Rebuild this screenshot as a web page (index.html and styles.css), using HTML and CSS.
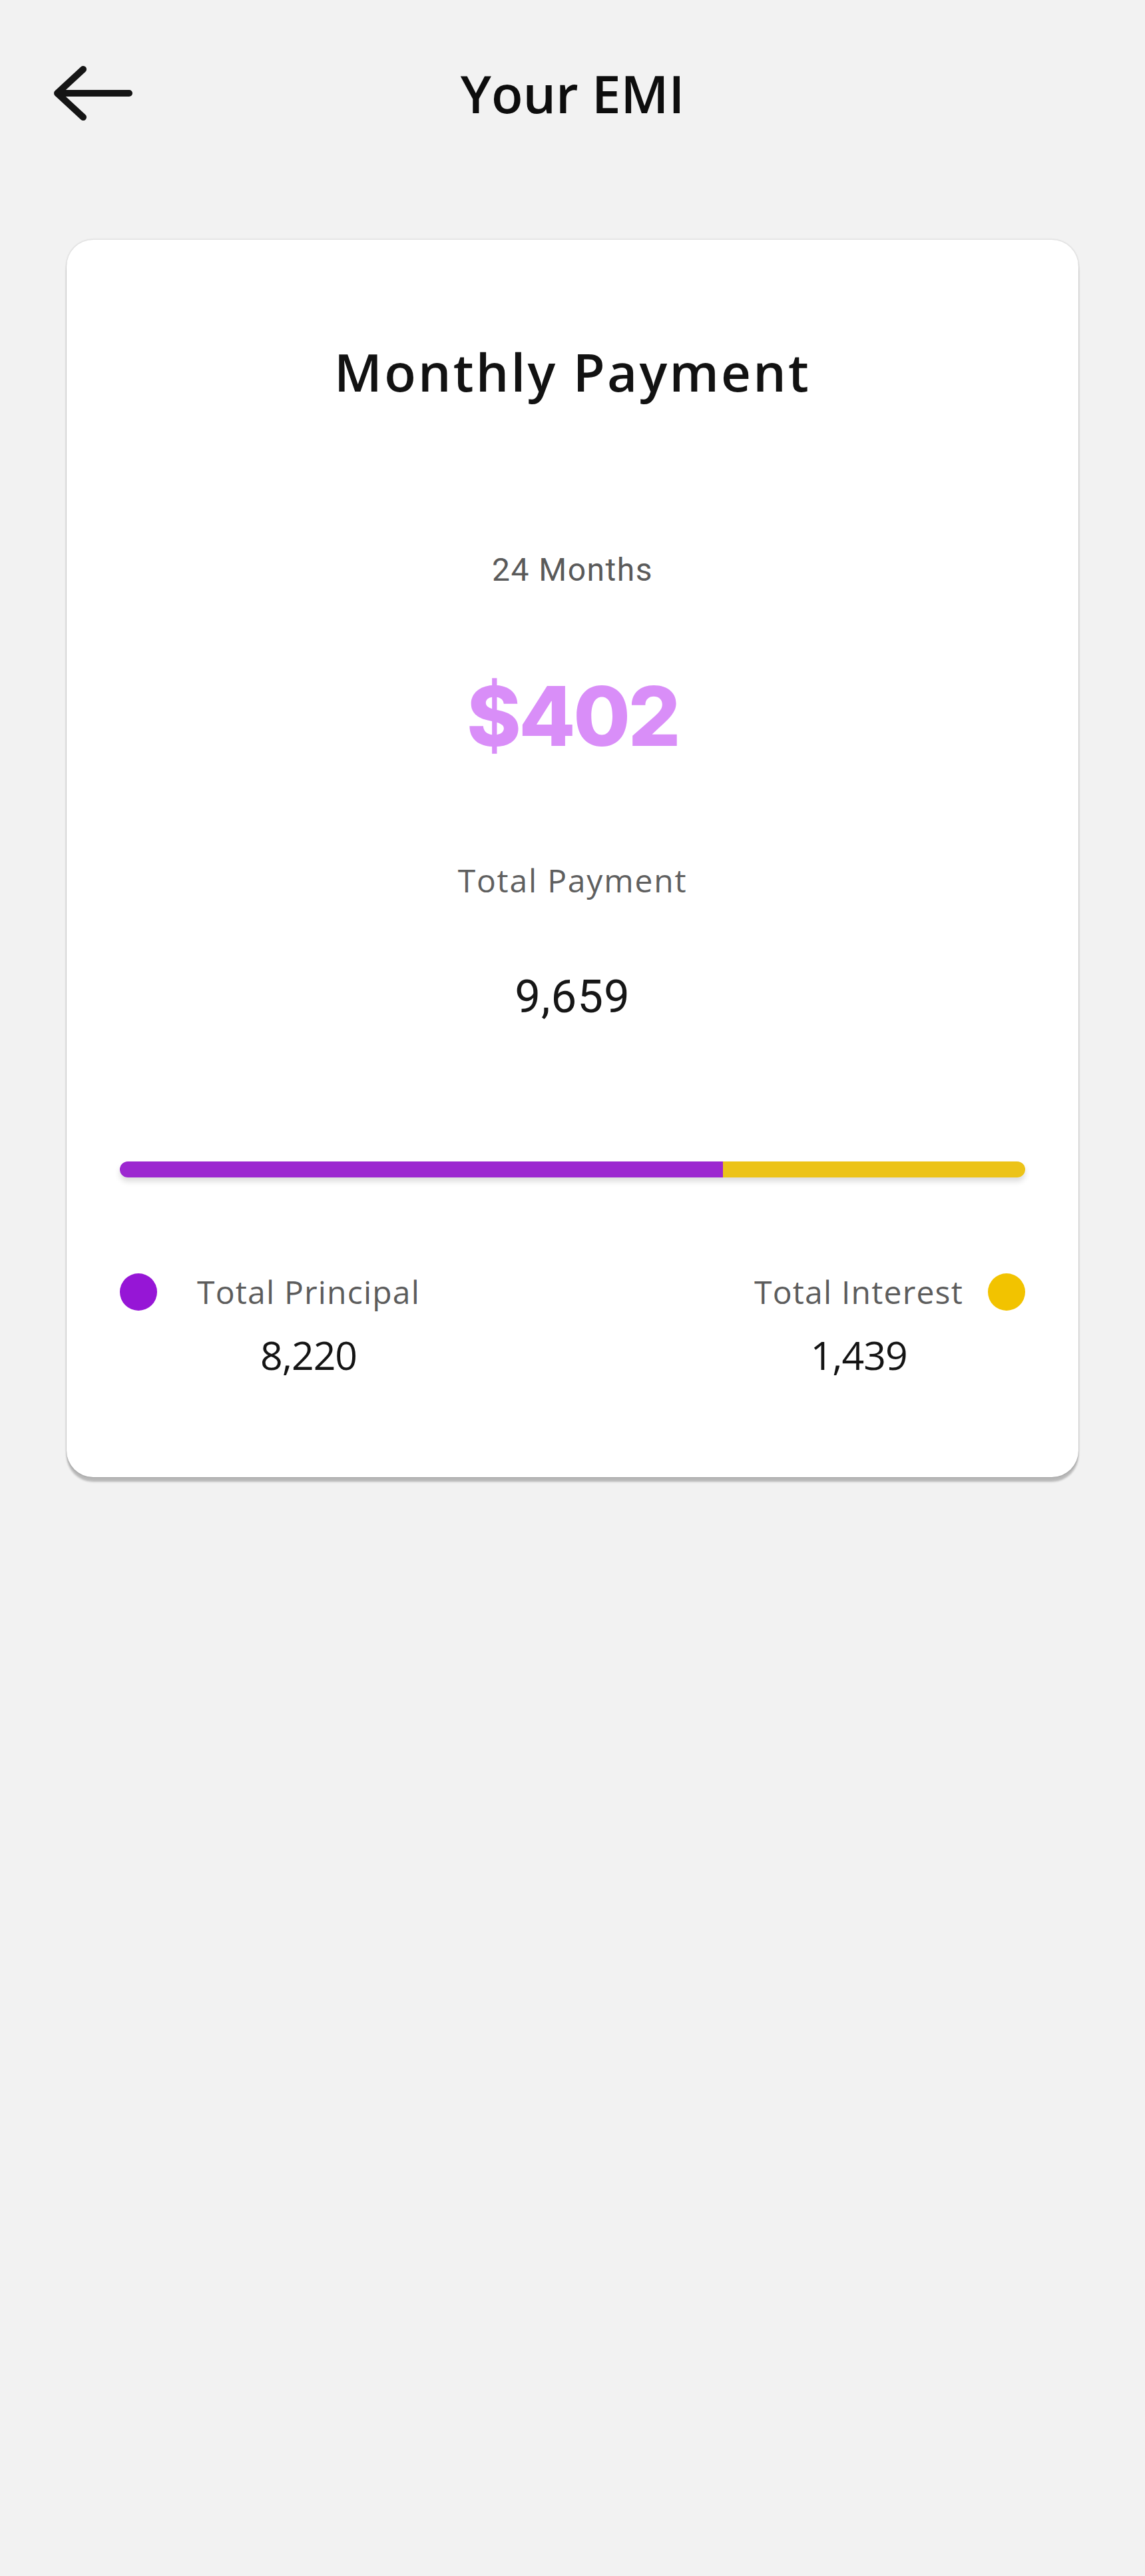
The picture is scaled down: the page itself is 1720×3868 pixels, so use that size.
FILE: index.html
```html
<!DOCTYPE html>
<html lang="en">
<head>
<meta charset="utf-8">
<title>Your EMI</title>
<link rel="stylesheet" href="styles.css">
</head>
<body>
<header class="topbar">
  <div class="topbar-left">
    <button class="back-btn" aria-label="Back">
      <svg class="back-icon" width="118" height="82" viewBox="0 0 118 82" aria-hidden="true">
        <path d="M5 41 H113 M44 5 L5 41 L44 77" fill="none" stroke="#151515" stroke-width="10" stroke-linecap="round" stroke-linejoin="round"/>
      </svg>
    </button>
  </div>
  <h1 class="topbar-title">Your EMI</h1>
  <div class="topbar-right"></div>
</header>

<main class="content">
  <section class="emi-card">
    <h2 class="card-title">Monthly Payment</h2>
    <p class="tenure">24 Months</p>
    <p class="emi-amount">$402</p>
    <p class="total-label">Total Payment</p>
    <p class="total-value">9,659</p>

    <div class="split-bar">
      <div class="split-principal" style="width: 66.6%"></div>
      <div class="split-interest"></div>
    </div>

    <div class="legend">
      <div class="legend-item legend-left">
        <span class="dot dot-principal"></span>
        <span class="legend-label">Total Principal</span>
        <span class="legend-value">8,220</span>
      </div>
      <div class="legend-item legend-right">
        <span class="legend-label">Total Interest</span>
        <span class="dot dot-interest"></span>
        <span class="legend-value">1,439</span>
      </div>
    </div>
  </section>
</main>
</body>
</html>
```

FILE: styles.css
```css
* {
  box-sizing: border-box;
}

html, body {
  margin: 0;
  padding: 0;
}

body {
  background: #f2f2f2;
  font-family: "Open Sans", "Noto Sans", sans-serif;
  color: #121212;
  min-height: 3868px;
}

.topbar {
  height: 280px;
  display: grid;
  grid-template-columns: 1fr auto 1fr;
  align-items: center;
}

.topbar-left {
  padding-left: 81px;
  display: flex;
  align-items: center;
}

.back-btn {
  background: none;
  border: 0;
  padding: 0;
  margin: 0;
  display: flex;
  cursor: pointer;
}

.back-icon {
  display: block;
}

.topbar-title {
  margin: 0;
  font-size: 78px;
  line-height: 80px;
  font-weight: 600;
  color: #0d0d0d;
  letter-spacing: 0;
}

.content {
  padding: 80px 100px 0;
}

.emi-card {
  background: #ffffff;
  border-radius: 40px;
  box-shadow: 0 7px 3px rgba(0, 0, 0, 0.24), 0 0 3px rgba(0, 0, 0, 0.22);
  padding: 148px 80px 149px;
  display: flex;
  flex-direction: column;
  align-items: center;
  text-align: center;
}

.emi-card p {
  margin: 0;
}

.card-title {
  margin: 0;
  font-size: 78px;
  line-height: 100px;
  font-weight: 600;
  color: #121212;
  letter-spacing: 3.2px;
}

.tenure {
  margin-top: 218px !important;
  font-family: Roboto, "Open Sans", sans-serif;
  font-size: 48px;
  line-height: 60px;
  color: #5a5a5a;
  letter-spacing: 1.5px;
}

.emi-amount {
  margin-top: 114px !important;
  font-family: Inter, "Open Sans", sans-serif;
  font-size: 124px;
  line-height: 150px;
  font-weight: 800;
  color: #d98ef8;
  letter-spacing: -3.5px;
}

.total-label {
  margin-top: 142px !important;
  font-size: 48px;
  line-height: 60px;
  color: #5f5f5f;
  letter-spacing: 1.8px;
}

.total-value {
  margin-top: 105px !important;
  font-family: Roboto, "Open Sans", sans-serif;
  font-size: 69px;
  line-height: 80px;
  color: #161616;
  letter-spacing: 1px;
}

.split-bar {
  margin-top: 207px;
  width: 100%;
  height: 24px;
  border-radius: 12px;
  display: flex;
  overflow: hidden;
  box-shadow: 0 6px 8px rgba(0, 0, 0, 0.14);
}

.split-principal {
  background: #9c27d0;
  height: 100%;
}

.split-interest {
  background: #ecc318;
  flex: 1;
  height: 100%;
}

.legend {
  margin-top: 144px;
  width: 100%;
  display: flex;
  justify-content: space-between;
}

.legend-item {
  display: grid;
  grid-template-rows: 56px auto;
  align-items: center;
}

.legend-left {
  grid-template-columns: 56px auto;
  column-gap: 60px;
}

.legend-right {
  grid-template-columns: auto 56px;
  column-gap: 37px;
}

.dot {
  width: 56px;
  height: 56px;
  border-radius: 50%;
  display: block;
}

.dot-principal {
  background: #9616d6;
}

.dot-interest {
  background: #f2c300;
}

.legend-label {
  font-size: 48px;
  line-height: 56px;
  color: #5c5c5c;
  white-space: nowrap;
  letter-spacing: 1.2px;
}

.legend-value {
  margin-top: 31px;
  font-size: 59px;
  line-height: 70px;
  color: #141414;
  text-align: center;
  letter-spacing: -1px;
}

.legend-left .legend-value {
  grid-column: 2;
  grid-row: 2;
}

.legend-right .legend-value {
  grid-column: 1;
  grid-row: 2;
}
```
